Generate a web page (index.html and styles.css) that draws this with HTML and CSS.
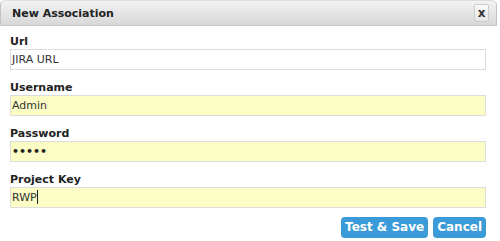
FILE: index.html
```html
<!DOCTYPE html>
<html lang="en">
<head>
    <meta charset="UTF-8">
    <title>New Association</title>
<link rel="stylesheet" href="styles.css">
</head>
<body>
    <div class="dialog">
        <div class="titlebar">
            <span class="title">New Association</span>
            <span class="close">x</span>
        </div>
        <div class="form">
            <div class="field">
                <label>Url</label>
                <div class="input">JIRA URL</div>
            </div>
            <div class="field">
                <label>Username</label>
                <div class="input filled">Admin</div>
            </div>
            <div class="field">
                <label>Password</label>
                <div class="input filled dots">&bull;&bull;&bull;&bull;&bull;</div>
            </div>
            <div class="field">
                <label>Project Key</label>
                <div class="input filled">RWP<span class="caret"></span></div>
            </div>
            <div class="buttons">
                <span class="btn">Test &amp; Save</span>
                <span class="btn">Cancel</span>
            </div>
        </div>
    </div>
</body>
</html>
```

FILE: styles.css
```css
*{
    margin: 0;
    padding: 0;
    box-sizing: border-box;
}
body{
    background: #fff;
    font-family: "DejaVu Sans", Verdana, sans-serif;
    font-size: 11px;
    color: #222;
}
.dialog{
    width: 497px;
}
.titlebar{
    height: 26px;
    display: flex;
    align-items: center;
    justify-content: space-between;
    padding: 0 7px 0 11px;
    background: linear-gradient(#f2f2f2, #d8d8d8);
    border: 1px solid #c4c4c4;
    border-top-color: #ddd;
    border-radius: 5px 5px 0 0;
}
.title{
    font-weight: bold;
    color: #222;
}
.close{
    width: 15px;
    height: 18px;
    line-height: 16px;
    text-align: center;
    font-weight: bold;
    font-size: 12px;
    color: #333;
    background: linear-gradient(#fafafa, #e6e6e6);
    border: 1px solid #ccc;
    border-radius: 2px;
}
.form{
    padding: 9px 11px 0 10px;
}
.field{
    margin-bottom: 11px;
}
.field label{
    display: block;
    height: 14px;
    line-height: 14px;
    font-weight: bold;
    color: #222;
}
.input{
    height: 21px;
    line-height: 19px;
    padding-left: 1px;
    border: 1px solid #ddd;
    color: #333;
    background: #fff;
}
.input.filled{
    background: #fbfdc4;
}
.input.dots{
    font-weight: bold;
    color: #222;
}
.caret{
    display: inline-block;
    width: 1px;
    height: 14px;
    vertical-align: -3px;
    background: #222;
}
.buttons{
    display: flex;
    justify-content: flex-end;
    gap: 5px;
    margin-top: -2px;
}
.btn{
    height: 21px;
    line-height: 21px;
    padding: 0 4px;
    background: #3b9ad8;
    color: #fff;
    font-size: 12px;
    font-weight: bold;
    border-radius: 4px;
}
```
